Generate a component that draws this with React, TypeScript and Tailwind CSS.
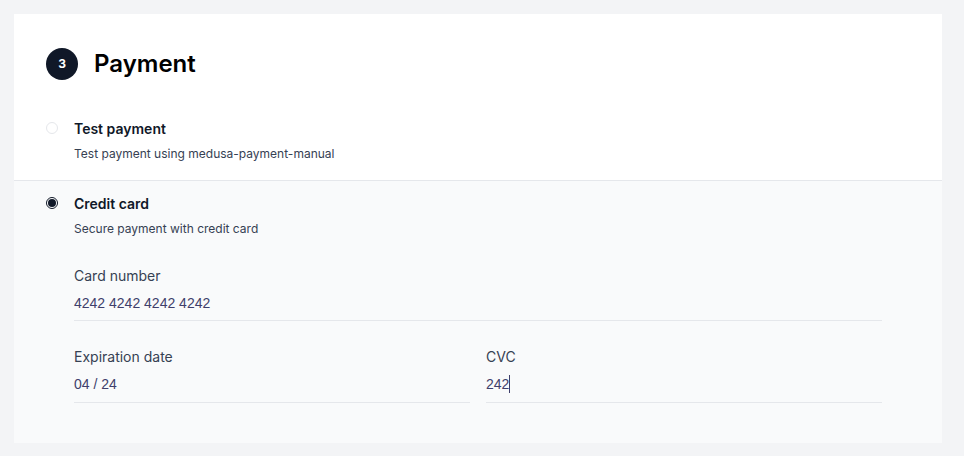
import React from 'react'

const font = { fontFamily: 'Inter, "Noto Sans", sans-serif' }
const inputFont = { fontFamily: '"Liberation Sans", Arial, sans-serif' }

function Radio({ checked }: { checked?: boolean }) {
  if (checked) {
    return (
      <span className="mt-[3px] flex h-3 w-3 shrink-0 items-center justify-center rounded-full border border-gray-900 bg-white">
        <span className="h-2 w-2 rounded-full bg-gray-900" />
      </span>
    )
  }
  return <span className="mt-[3px] h-3 w-3 shrink-0 rounded-full border border-gray-200 bg-white" />
}

function Field({ label, value, caret, last }: { label: string; value: string; caret?: boolean; last?: boolean }) {
  return (
    <div className={last ? 'flex flex-col border-b border-gray-200 pb-2' : 'flex flex-col border-b border-gray-200 pb-[7px]'}>
      <span className="text-sm leading-5 text-gray-700">{label}</span>
      <span className="mt-[7px] flex items-center text-sm leading-5 text-[#3f3f6b]" style={inputFont}>
        {value}
        {caret && <span className="inline-block h-[18px] w-px bg-[#3f3f6b]" />}
      </span>
    </div>
  )
}

export default function App() {
  return (
    <div className="min-h-screen bg-gray-100 p-[14px] antialiased" style={font}>
      <div className="w-[928px] bg-white">
        <div className="flex items-center gap-4 px-8 pt-[34px]">
          <div className="flex h-8 w-8 items-center justify-center rounded-full bg-gray-900 text-xs font-bold text-white">
            3
          </div>
          <h2 className="text-2xl font-semibold text-black">Payment</h2>
        </div>

        <div className="mt-[25px] flex gap-4 px-8 pt-[14px] pb-[18px]">
          <Radio />
          <div className="flex flex-col">
            <span className="text-sm font-semibold leading-5 text-gray-900">Test payment</span>
            <span className="mt-[7px] text-xs leading-4 text-gray-700">
              Test payment using medusa-payment-manual
            </span>
          </div>
        </div>

        <div className="border-t border-gray-200 bg-gray-50 px-8 pt-[13px] pb-10">
          <div className="flex gap-4">
            <Radio checked />
            <div className="flex flex-col">
              <span className="text-sm font-semibold leading-5 text-gray-900">Credit card</span>
              <span className="mt-[7px] text-xs leading-4 text-gray-700">Secure payment with credit card</span>
            </div>
          </div>
          <div className="mx-7 mt-[29px] flex flex-col gap-[26px]">
            <Field label="Card number" value="4242 4242 4242 4242" />
            <div className="grid grid-cols-2 gap-4">
              <Field label="Expiration date" value="04 / 24" last />
              <Field label="CVC" value="242" caret last />
            </div>
          </div>
        </div>
      </div>
    </div>
  )
}
